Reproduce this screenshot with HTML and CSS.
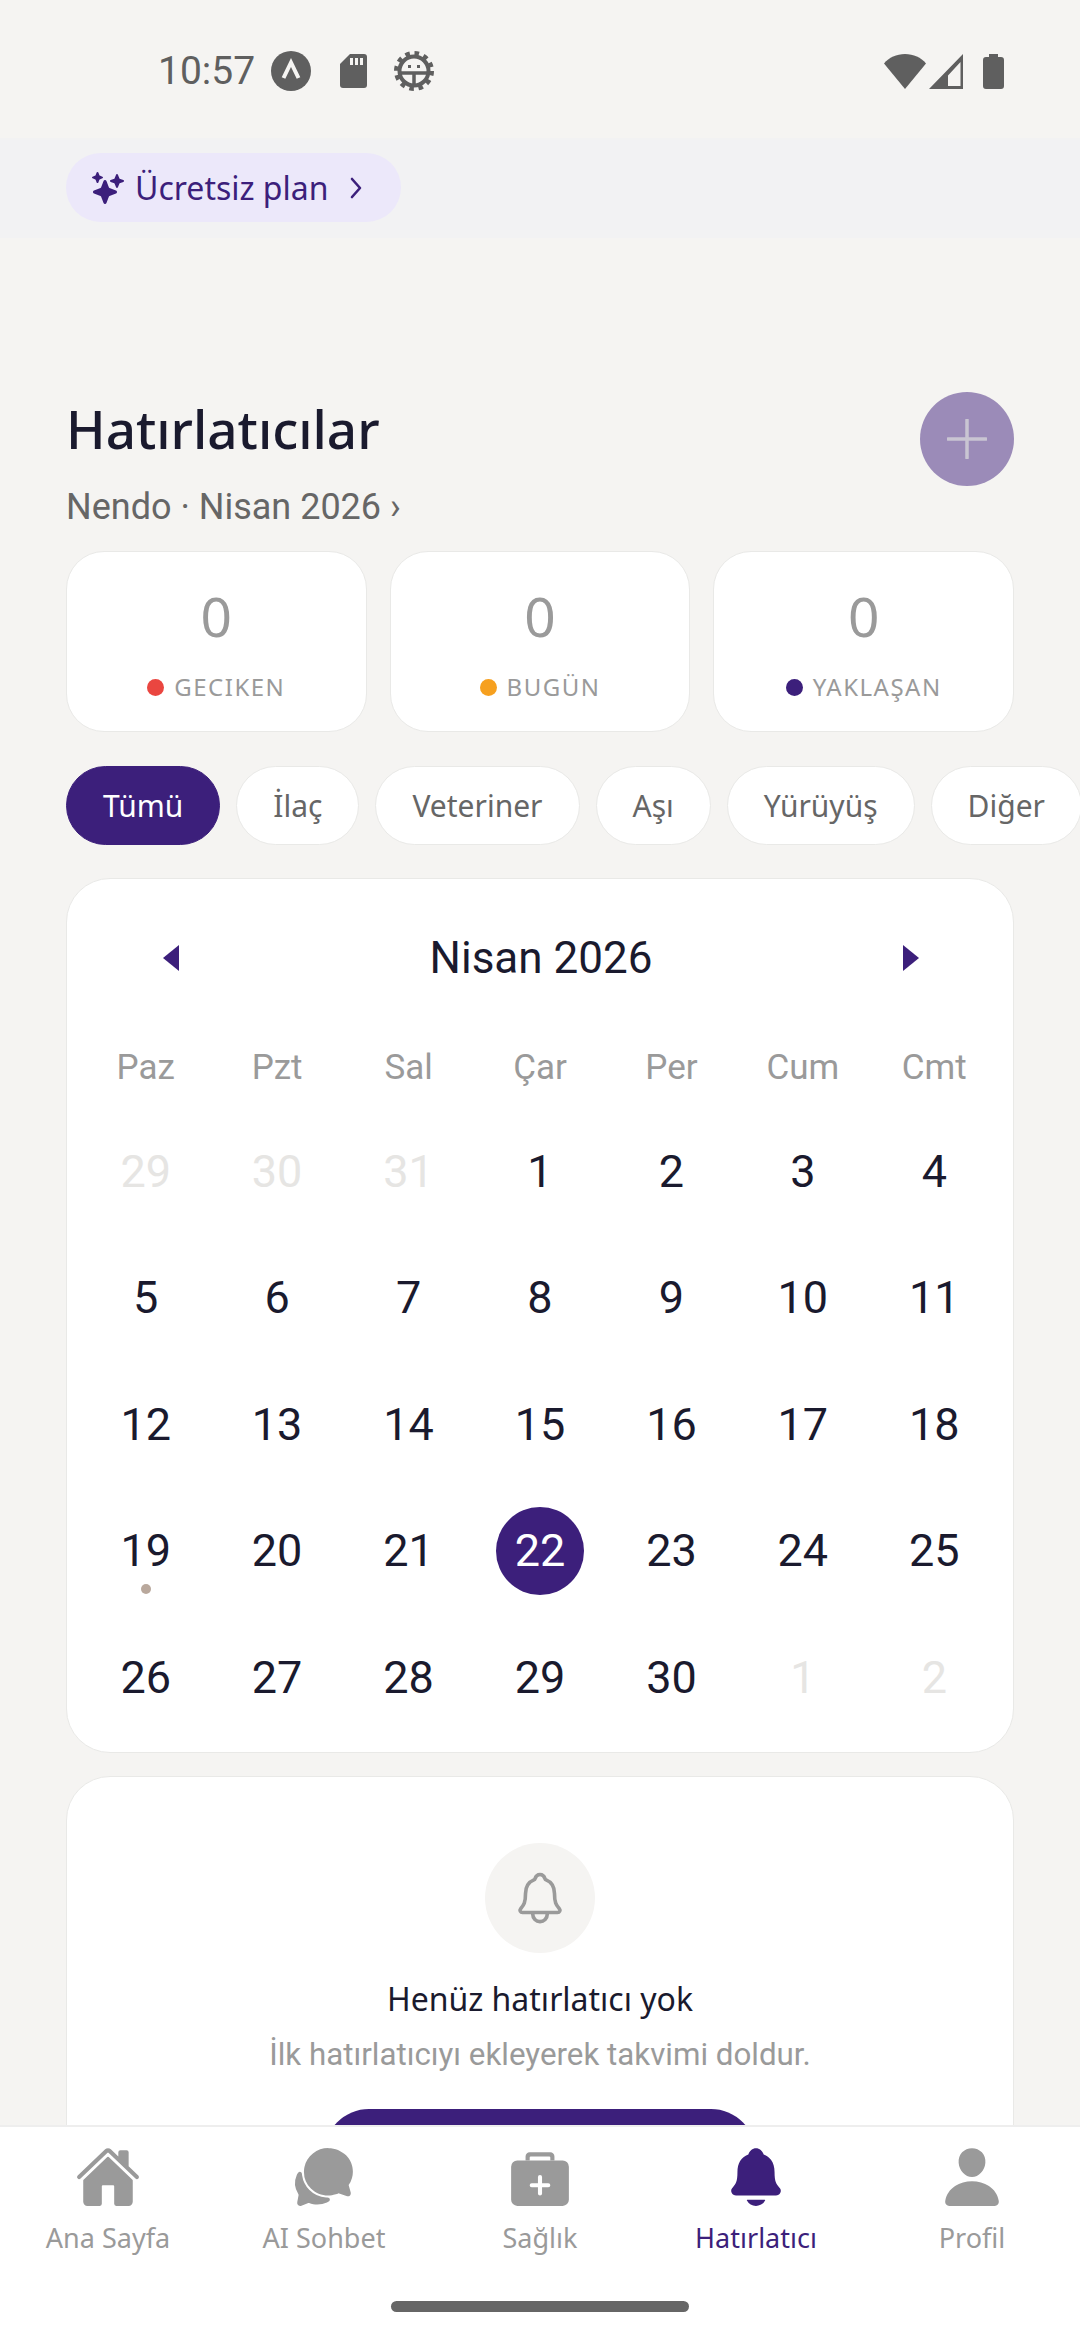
FILE: index.html
```html
<!DOCTYPE html>
<html lang="tr">
<head>
  <meta charset="UTF-8" />
  <meta name="viewport" content="width=device-width, initial-scale=1.0" />
  <title>Hatırlatıcılar</title>
  <link rel="stylesheet" href="styles.css">
</head>
<body>
  <!-- Status bar -->
  <div class="status">
    <div class="status-left">
      <span class="clock">10:57</span>
      <svg class="st-a" viewBox="0 0 40 40"><circle cx="20" cy="20" r="20" fill="#5f5f5f"/><path d="M12.500 27 20 11.500 27.500 27" fill="none" stroke="#f5f4f2" stroke-width="4"/></svg>
      <svg class="st-sd" viewBox="0 0 27 34"><path d="M10 0h14a3 3 0 0 1 3 3v28a3 3 0 0 1-3 3H3a3 3 0 0 1-3-3V10z" fill="#5f5f5f"/><path d="M10 4h3v7h-3zM15 4h3v7h-3zM20 4h3v7h-3z" fill="#f5f4f2"/></svg>
      <svg class="st-gear" viewBox="0 0 40 40"><circle cx="20" cy="20" r="14.500" fill="none" stroke="#5f5f5f" stroke-width="4"/><circle cx="20" cy="20" r="17.500" fill="none" stroke="#5f5f5f" stroke-width="5" stroke-dasharray="4.500 4.660"/><path d="M7 22h26M20 22v11" stroke="#5f5f5f" stroke-width="3.500"/><path d="M14 14h3v3h-3zM23 14h3v3h-3z" fill="#5f5f5f"/></svg>
    </div>
    <div class="status-right">
      <svg class="st-wifi" viewBox="0 0 42 35"><path d="M0 9.500C5 3.500 12.500 0 21 0s16 3.500 21 9.500L21 35z" fill="#5f5f5f"/></svg>
      <svg class="st-signal" viewBox="0 0 34 35"><path d="M34 0v35H0zM31.500 8 19 21.500v10.500h12.500z" fill="#5f5f5f" fill-rule="evenodd"/></svg>
      <svg class="st-batt" viewBox="0 0 21 35"><path d="M6 0h9v3h3a3 3 0 0 1 3 3v26a3 3 0 0 1-3 3H3a3 3 0 0 1-3-3V6a3 3 0 0 1 3-3h3z" fill="#5f5f5f"/></svg>
    </div>
  </div>

  <!-- Plan band -->
  <div class="plan-band">
    <div class="plan-pill">
      <svg class="sparkle" viewBox="0 0 512 512"><path d="M208 512a24.840 24.840 0 01-23.340-16l-39.840-103.600a16.060 16.060 0 00-9.190-9.190L32 343.340a25 25 0 010-46.680l103.600-39.840a16.060 16.060 0 009.190-9.190L184.660 144a25 25 0 0146.680 0l39.840 103.600a16.060 16.060 0 009.190 9.190l103 39.630a25.490 25.490 0 0116.630 24.100 24.820 24.820 0 01-16 22.820l-103.600 39.840a16.060 16.060 0 00-9.190 9.190L231.340 496A24.840 24.840 0 01208 512zM88 176a14.670 14.670 0 01-13.690-9.400l-16.860-43.840a7.280 7.280 0 00-4.210-4.210L9.400 101.690a14.670 14.670 0 010-27.380l43.840-16.860a7.310 7.310 0 004.210-4.210L74.160 9.790A15 15 0 0186.230.110a14.670 14.670 0 0115.460 9.290l16.860 43.840a7.310 7.310 0 004.210 4.210l43.840 16.860a14.670 14.670 0 010 27.380l-43.840 16.860a7.280 7.280 0 00-4.210 4.210L101.690 166.600A14.670 14.670 0 0188 176zM400 256a16 16 0 01-14.930-10.260l-22.840-59.370a8 8 0 00-4.600-4.600l-59.370-22.840a16 16 0 010-29.860l59.370-22.840a8 8 0 004.600-4.600l22.670-58.950a16.450 16.450 0 0113.170-10.570 16 16 0 0116.860 10.150l22.840 59.370a8 8 0 004.600 4.600l59.370 22.840a16 16 0 010 29.860l-59.370 22.840a8 8 0 00-4.600 4.600l-22.840 59.370A16 16 0 01400 256z"/></svg>
      <span>Ücretsiz plan</span>
      <svg class="plan-chev" viewBox="0 0 12 22"><path d="M2 2l8 9-8 9" fill="none" stroke="#3c1f7b" stroke-width="2.600" stroke-linecap="round" stroke-linejoin="round"/></svg>
    </div>
  </div>

  <main class="screen">
    <div class="head">
      <div>
        <h1>Hatırlatıcılar</h1>
        <p class="head-sub">Nendo · Nisan 2026 ›</p>
      </div>
      <div class="add-btn">
        <svg viewBox="0 0 40 40"><path d="M20 1v38M1 20h38" stroke="#c9c5d2" stroke-width="3.500" stroke-linecap="round"/></svg>
      </div>
    </div>

    <div class="stats">
      <div class="stat"><div class="stat-num">0</div><div class="stat-label"><i class="dot dot-red"></i>GECIKEN</div></div>
      <div class="stat"><div class="stat-num">0</div><div class="stat-label"><i class="dot dot-orange"></i>BUGÜN</div></div>
      <div class="stat"><div class="stat-num">0</div><div class="stat-label"><i class="dot dot-purple"></i>YAKLAŞAN</div></div>
    </div>

    <div class="chips">
      <span class="chip active">Tümü</span>
      <span class="chip">İlaç</span>
      <span class="chip">Veteriner</span>
      <span class="chip">Aşı</span>
      <span class="chip">Yürüyüş</span>
      <span class="chip">Diğer</span>
    </div>

    <section class="card calendar">
      <div class="cal-head">
        <svg class="caret" viewBox="0 0 16 26"><path d="M16 0v26L0 13z"/></svg>
        <span class="cal-title">Nisan 2026</span>
        <svg class="caret" viewBox="0 0 16 26"><path d="M0 0v26l16-13z"/></svg>
      </div>
      <div class="cal-grid">
        <div class="wd">Paz</div><div class="wd">Pzt</div><div class="wd">Sal</div><div class="wd">Çar</div><div class="wd">Per</div><div class="wd">Cum</div><div class="wd">Cmt</div>
        <div class="day off">29</div><div class="day off">30</div><div class="day off">31</div><div class="day">1</div><div class="day">2</div><div class="day">3</div><div class="day">4</div>
        <div class="day">5</div><div class="day">6</div><div class="day">7</div><div class="day">8</div><div class="day">9</div><div class="day">10</div><div class="day">11</div>
        <div class="day">12</div><div class="day">13</div><div class="day">14</div><div class="day">15</div><div class="day">16</div><div class="day">17</div><div class="day">18</div>
        <div class="day marked">19</div><div class="day">20</div><div class="day">21</div><div class="day today"><span>22</span></div><div class="day">23</div><div class="day">24</div><div class="day">25</div>
        <div class="day">26</div><div class="day">27</div><div class="day">28</div><div class="day">29</div><div class="day">30</div><div class="day off">1</div><div class="day off">2</div>
      </div>
    </section>

    <section class="card empty">
      <div class="empty-icon">
        <svg viewBox="0 0 512 512"><path d="M427.680 351.430C402 320 383.870 304 383.870 217.350 383.870 138 343.350 109.730 310 96c-4.430-1.820-8.600-6-9.950-10.550C294.200 65.540 277.800 48 256 48s-38.210 17.550-44 37.470c-1.350 4.600-5.520 8.710-9.950 10.530-33.390 13.750-73.870 41.920-73.870 121.350C128.130 304 110 320 84.320 351.430 73.680 364.450 83 384 101.610 384h308.880c18.510 0 27.770-19.610 17.190-32.570zM320 384v16a64 64 0 01-128 0v-16" fill="none" stroke="#9a9a9a" stroke-width="32" stroke-linecap="round" stroke-linejoin="round"/></svg>
      </div>
      <div class="empty-title">Henüz hatırlatıcı yok</div>
      <div class="empty-sub">İlk hatırlatıcıyı ekleyerek takvimi doldur.</div>
      <div class="empty-btn"></div>
    </section>
  </main>

  <!-- Bottom tabs -->
  <nav class="tabs">
    <div class="tab">
      <svg viewBox="0 0 512 512"><path d="M261.560 101.280a8 8 0 00-11.060 0L66.400 277.150a8 8 0 00-2.470 5.790L63.900 448a32 32 0 0032 32H192a16 16 0 0016-16V328a8 8 0 018-8h80a8 8 0 018 8v136a16 16 0 0016 16h96.060a32 32 0 0032-32V282.940a8 8 0 00-2.470-5.790z"/><path d="M490.910 244.150l-74.800-71.560V64a16 16 0 00-16-16h-48a16 16 0 00-16 16v32l-57.920-55.380C272.770 35.140 264.710 32 256 32c-8.680 0-16.720 3.140-22.140 8.630l-212.700 203.500c-6.220 6-7 15.870-1.340 22.370A16 16 0 0043 267.560L250.500 69.280a8 8 0 0111.060 0l207.520 198.280a16 16 0 0022.590-.44c6.140-6.360 5.630-16.860-.76-22.970z"/></svg>
      <span>Ana Sayfa</span>
    </div>
    <div class="tab">
      <svg viewBox="0 0 512 512"><path d="M439.900 405.600a26.770 26.770 0 01-9.590-2l-56.780-20.130-.42-.17a9.880 9.880 0 00-3.910-.76 10.320 10.320 0 00-3.620.66c-1.380.52-13.810 5.190-26.850 8.770-7.070 1.940-31.680 8.270-51.430 8.270-50.480 0-97.680-19.400-132.890-54.630A183.380 183.380 0 01100.300 215.100a175.900 175.900 0 014.060-37.580c8.790-40.620 32.070-77.570 65.550-104A194.760 194.760 0 01290.300 32c52.210 0 100.860 20 137 56.180 34.160 34.270 52.880 79.330 52.730 126.870a177.860 177.860 0 01-30.300 99.150l-.19.280-.74 1c-.17.230-.34.450-.5.680l-.15.270a21.630 21.630 0 00-1.080 2.090l15.740 55.940a26.420 26.420 0 011.120 7.110 24 24 0 01-24.030 24.030z"/><path d="M299.870 425.390a15.740 15.740 0 00-10.290-8.100c-5.780-1.530-12.520-1.270-17.670-1.650a201.780 201.780 0 01-128.820-58.750A199.210 199.210 0 0186.400 244.160C85 234.420 85 232 85 232a16 16 0 00-28-10.580s-7.880 8.580-11.600 17.190a162.090 162.090 0 0011 150.060C59 393 59 395 58.420 399.500c-2.730 14.110-7.510 39-10 51.910a24 24 0 008 22.920l.46.390A24.340 24.340 0 0072 480a23.420 23.420 0 009-1.790l53.510-20.650a8.050 8.050 0 015.720 0c21.070 7.840 43 12 63.780 12a176 176 0 0074.910-16.660c5.460-2.560 14-5.340 19-11.120a15 15 0 001.950-16.380z"/></svg>
      <span>AI Sohbet</span>
    </div>
    <div class="tab">
      <svg viewBox="0 0 512 512"><path d="M336 64H176a32 32 0 00-32 32v32h32v-24a8 8 0 018-8h144a8 8 0 018 8v24h32V96a32 32 0 00-32-32z"/><path d="M432 128H80a48 48 0 00-48 48v256a48 48 0 0048 48h352a48 48 0 0048-48V176a48 48 0 00-48-48zm-112 208h-48v48a16 16 0 01-32 0v-48h-48a16 16 0 010-32h48v-48a16 16 0 0132 0v48h48a16 16 0 010 32z"/></svg>
      <span>Sağlık</span>
    </div>
    <div class="tab active">
      <svg viewBox="0 0 512 512"><path d="M440.080 341.310c-1.660-2-3.290-4-4.890-5.930-22-26.610-35.310-42.670-35.310-118 0-39-9.330-71-27.720-95-13.560-17.730-31.890-31.180-56.050-41.120a3 3 0 01-.82-.67C306.600 51.490 282.820 32 256 32s-50.590 19.490-59.280 48.560a3.130 3.130 0 01-.81.65c-56.380 23.210-83.780 67.740-83.780 136.140 0 75.360-13.290 91.420-35.310 118-1.600 1.930-3.230 3.890-4.890 5.930a35.160 35.160 0 00-4.650 37.620c6.170 13 19.320 21.070 34.330 21.070H410.500c14.940 0 28-8.060 34.190-21a35.170 35.170 0 00-4.610-37.660zM256 480a80.060 80.060 0 0070.440-42.130 4 4 0 00-3.540-5.870H189.120a4 4 0 00-3.550 5.870A80.060 80.060 0 00256 480z"/></svg>
      <span>Hatırlatıcı</span>
    </div>
    <div class="tab">
      <svg viewBox="0 0 512 512"><path d="M332.640 64.580C313.180 43.570 286 32 256 32c-30.160 0-57.430 11.500-76.800 32.380-19.580 21.110-29.120 49.800-26.880 80.780C156.760 206.280 203.270 256 256 256s99.160-49.710 103.670-110.820c2.270-30.700-7.330-59.330-27.030-80.600zM432 480H80a31 31 0 01-24.200-11.130c-6.500-7.770-9.120-18.380-7.180-29.110C57.060 392.940 83.400 353.610 124.800 326c36.780-24.510 83.370-38 131.200-38s94.420 13.500 131.200 38c41.400 27.600 67.740 66.930 76.180 113.750 1.940 10.730-.68 21.340-7.180 29.110A31 31 0 01432 480z"/></svg>
      <span>Profil</span>
    </div>
  </nav>
  <div class="home-bar"></div>
</body>
</html>
```

FILE: styles.css
```css
:root {
  --purple: #3c1f7b;
  --bg: #f5f4f2;
  --ink: #1a1a2e;
  --muted: #9a9a9a;
  --grey: #666666;
  --line: #e9e9e7;
}
html, body {
  margin: 0; padding: 0;
  width: 1080px; height: 2340px;
  overflow: hidden;
  background: var(--bg);
  font-family: 'Noto Sans', Lato, sans-serif;
}
body {
  position: relative;
  display: flex;
  flex-direction: column;
}

/* Status bar */
.status {
  flex: 0 0 138px;
  display: flex;
  justify-content: space-between;
  align-items: center;
  box-sizing: border-box;
  padding: 4px 76px 0 158px;
}
.status-left, .status-right {
  display: flex;
  align-items: center;
}
.clock {
  font-family: Roboto, sans-serif;
  font-size: 39px;
  color: #5f5f5f;
}
.st-a { width: 40px; height: 40px; margin-left: 16px; }
.st-sd { width: 27px; height: 34px; margin-left: 29px; }
.st-gear { width: 40px; height: 40px; margin-left: 27px; }
.st-wifi { width: 42px; height: 35px; }
.st-signal { width: 34px; height: 35px; margin-left: 3px; }
.st-batt { width: 21px; height: 35px; margin-left: 20px; }

/* Plan band */
.plan-band {
  flex: 0 0 100px;
  box-sizing: border-box;
  padding: 15px 66px 0;
  background: #f2f2f3;
}
.plan-pill {
  display: inline-flex;
  align-items: center;
  height: 69px;
  width: 335px;
  box-sizing: border-box;
  padding-left: 26px;
  border-radius: 35px;
  background: #ece8fa;
  color: var(--purple);
  font-size: 32px;
}
.sparkle { width: 32px; height: 32px; fill: var(--purple); margin-right: 11px; }
.plan-chev { width: 12px; height: 22px; margin-left: 21px; }

/* Scrolling part */
.screen {
  flex: 1;
  min-height: 0;
  overflow: hidden;
  padding: 0 66px;
}
.head {
  display: flex;
  justify-content: space-between;
  align-items: flex-start;
  margin-top: 154px;
}
h1 {
  margin: 0;
  padding-top: 5px;
  font-size: 53px;
  line-height: 64px;
  font-weight: 500;
  color: var(--ink);
}
.head-sub {
  margin: 26px 0 0;
  font-family: Roboto, sans-serif;
  font-size: 36px;
  line-height: 40px;
  color: var(--grey);
}
.add-btn {
  width: 94px;
  height: 94px;
  border-radius: 50%;
  background: #9b8bb8;
  display: flex;
  align-items: center;
  justify-content: center;
}
.add-btn svg { width: 40px; height: 40px; }

/* Stats */
.stats {
  display: flex;
  gap: 23px;
  margin-top: 24px;
}
.stat {
  flex: 1;
  height: 181px;
  box-sizing: border-box;
  padding-top: 34px;
  background: #fff;
  border: 1px solid var(--line);
  border-radius: 38px;
  text-align: center;
}
.stat-num {
  font-size: 55px;
  line-height: 60px;
  color: var(--muted);
}
.stat-label {
  display: flex;
  align-items: center;
  justify-content: center;
  gap: 10px;
  margin-top: 26px;
  font-size: 24px;
  line-height: 30px;
  letter-spacing: 1.500px;
  color: var(--muted);
}
.dot { width: 17px; height: 17px; border-radius: 50%; }
.dot-red { background: #ea4640; }
.dot-orange { background: #f6a01f; }
.dot-purple { background: var(--purple); }

/* Filter chips */
.chips {
  display: flex;
  gap: 16px;
  margin: 34px -66px 0 0;
  overflow: hidden;
}
.chip {
  flex: none;
  height: 79px;
  box-sizing: border-box;
  padding: 0 36px;
  display: flex;
  align-items: center;
  background: #fff;
  border: 1px solid var(--line);
  border-radius: 40px;
  font-size: 30px;
  color: var(--grey);
}
.chip.active {
  background: var(--purple);
  border-color: var(--purple);
  color: #fff;
}

/* Cards */
.card {
  background: #fff;
  border: 1px solid var(--line);
  border-radius: 44px;
  box-sizing: border-box;
}
.calendar {
  height: 875px;
  margin-top: 33px;
  padding: 0 13px;
}
.cal-head {
  display: flex;
  align-items: center;
  justify-content: space-between;
  height: 156px;
  padding: 2px 81px 0 83px;
  box-sizing: border-box;
}
.cal-title {
  font-family: Roboto, sans-serif;
  font-size: 44px;
  color: var(--ink);
}
.caret { width: 16px; height: 26px; fill: var(--purple); }
.cal-grid {
  display: grid;
  grid-template-columns: repeat(7, 1fr);
  grid-template-rows: 73px repeat(5, 126.500px);
  font-family: Roboto, sans-serif;
  text-align: center;
}
.wd {
  font-size: 35px;
  color: var(--muted);
  line-height: 66px;
}
.day {
  position: relative;
  display: flex;
  align-items: center;
  justify-content: center;
  font-size: 45px;
  color: var(--ink);
}
.day.off { color: #e6e5e3; }
.day.today span {
  width: 88px;
  height: 88px;
  border-radius: 50%;
  background: var(--purple);
  color: #fff;
  display: flex;
  align-items: center;
  justify-content: center;
}
.day.marked::after {
  content: '';
  position: absolute;
  left: 50%;
  top: 96px;
  width: 10px;
  height: 10px;
  margin-left: -5px;
  border-radius: 50%;
  background: #b9a89c;
}

/* Empty state */
.empty {
  margin-top: 23px;
  padding-top: 66px;
  display: flex;
  flex-direction: column;
  align-items: center;
  height: 500px;
}
.empty-icon {
  width: 110px;
  height: 110px;
  border-radius: 50%;
  background: var(--bg);
  display: flex;
  align-items: center;
  justify-content: center;
}
.empty-icon svg { width: 58px; height: 58px; }
.empty-title {
  margin-top: 26px;
  font-size: 32px;
  line-height: 40px;
  color: var(--ink);
}
.empty-sub {
  margin-top: 16px;
  font-family: Roboto, sans-serif;
  font-size: 31.300px;
  line-height: 40px;
  color: var(--muted);
}
.empty-btn {
  width: 432px;
  height: 90px;
  margin-top: 34px;
  border-radius: 45px;
  background: var(--purple);
}

/* Bottom tabs */
.tabs {
  flex: 0 0 215px;
  box-sizing: border-box;
  display: flex;
  padding-top: 17px;
  background: #fff;
  border-top: 2px solid #eeeeee;
}
.tab {
  flex: 1;
  display: flex;
  flex-direction: column;
  align-items: center;
  font-size: 27px;
  line-height: 34px;
  color: var(--muted);
}
.tab svg { width: 66px; height: 66px; fill: var(--muted); margin-bottom: 11px; }
.tab.active { color: var(--purple); }
.tab.active svg { fill: var(--purple); }
.home-bar {
  position: absolute;
  left: 391px;
  top: 2301px;
  width: 298px;
  height: 11px;
  border-radius: 6px;
  background: #666666;
}
```
